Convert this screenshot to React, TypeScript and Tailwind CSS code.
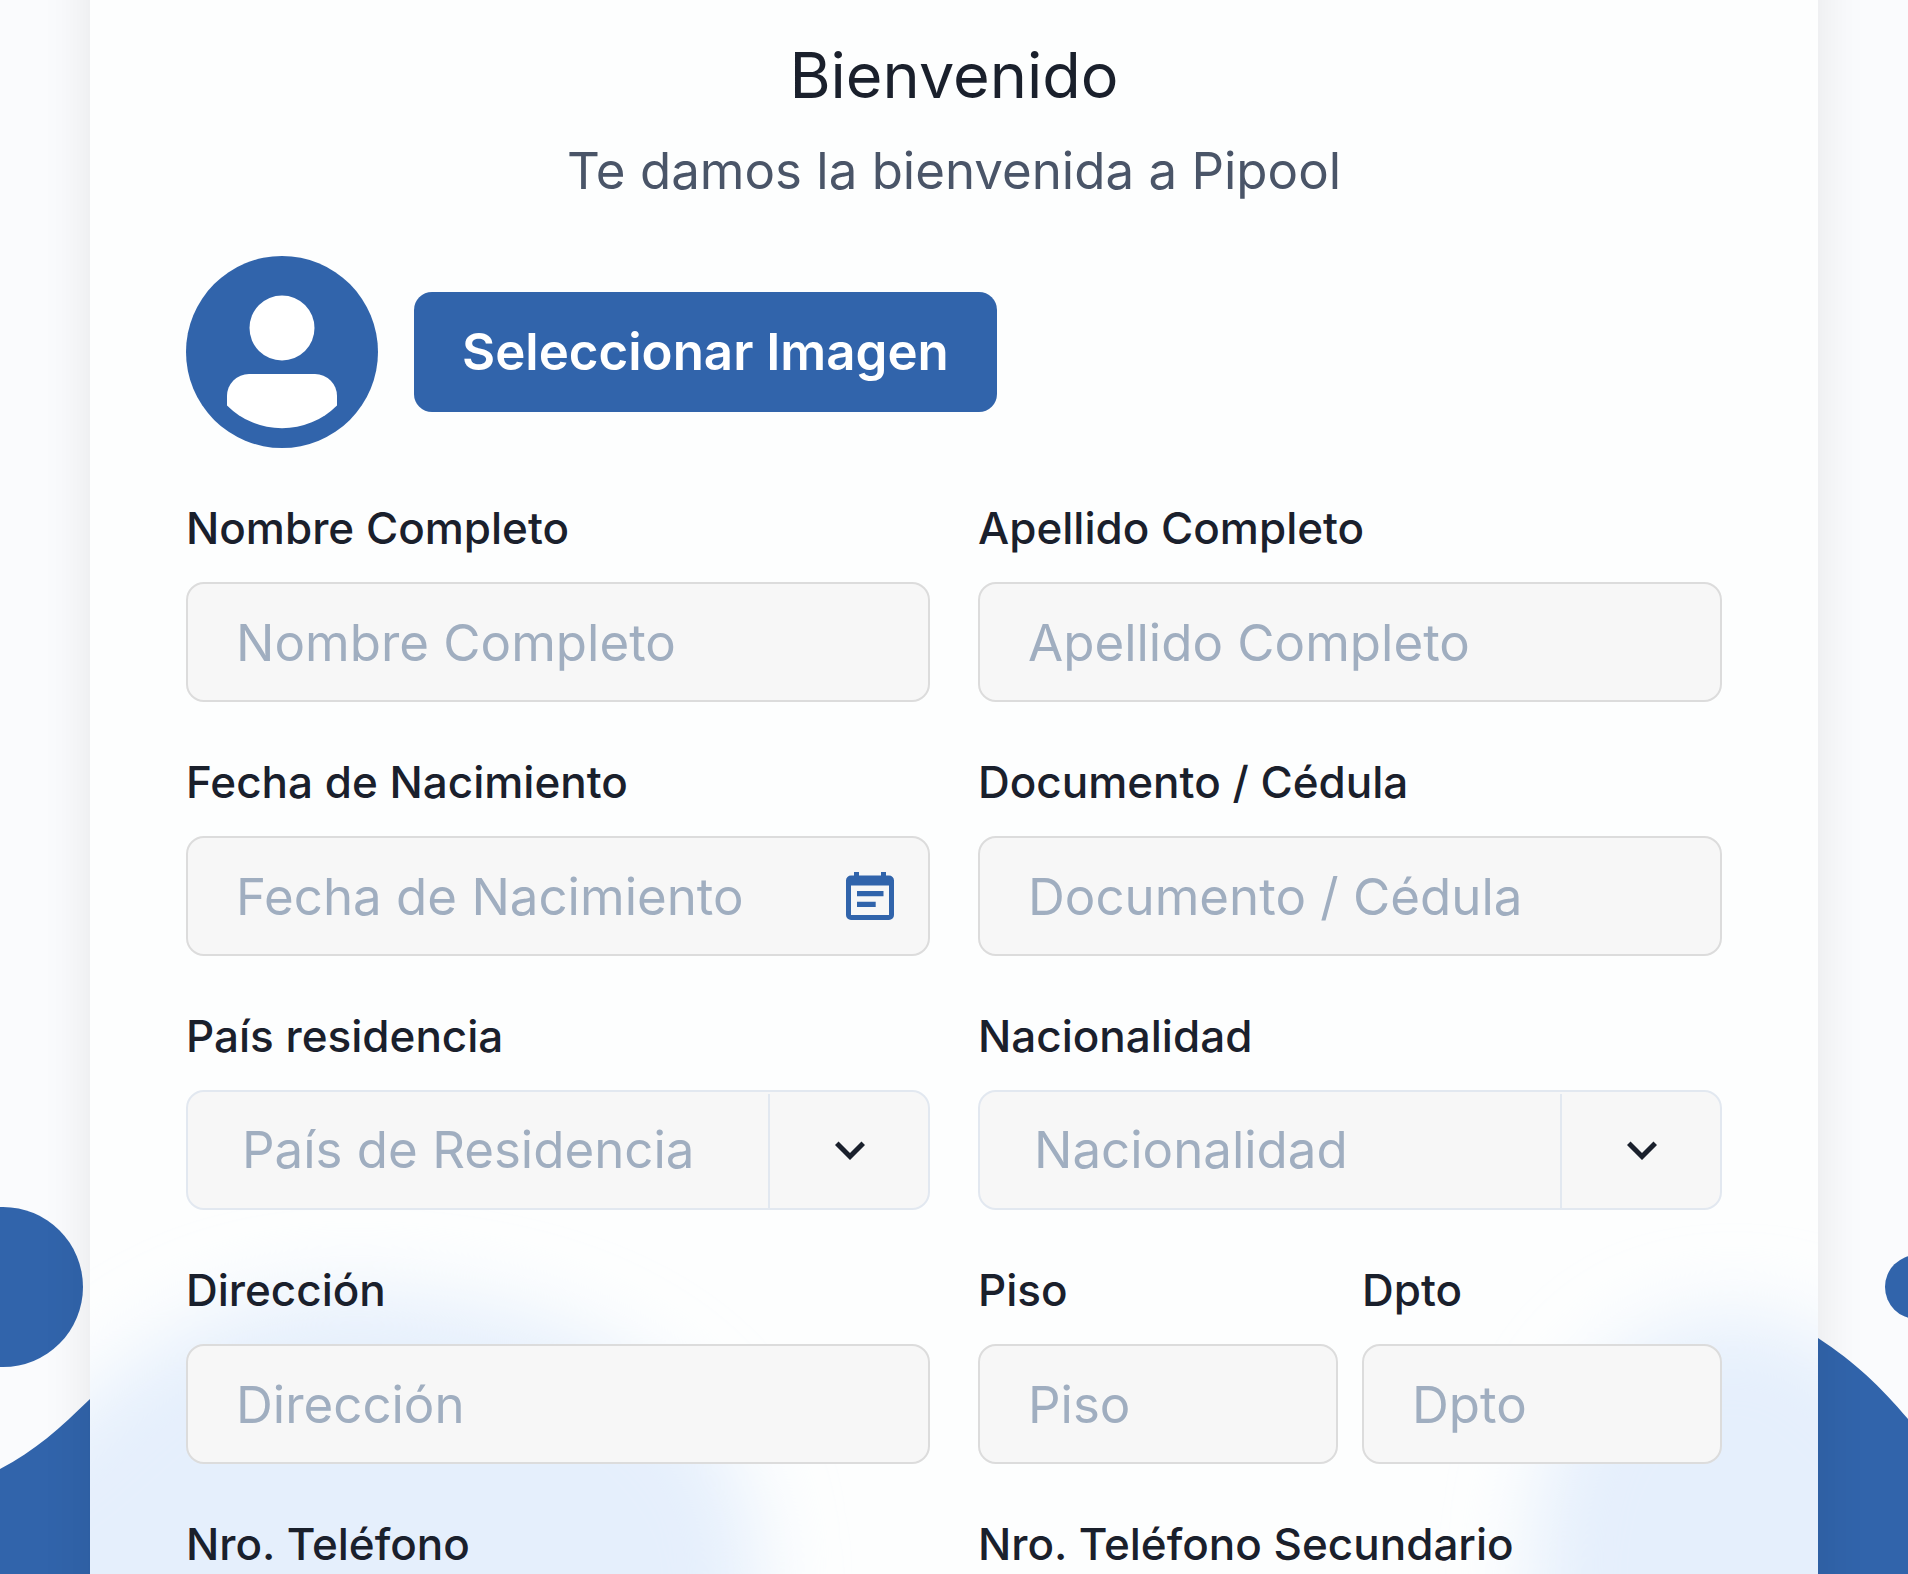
import type { ReactNode } from "react";

const inputClass =
  "h-[120px] w-full min-w-0 rounded-[18px] border-2 border-[#dcdcdc] bg-[#f7f7f7] px-12 text-[51px] text-[#1a202c] outline-none placeholder:text-[#a0aec0] focus:border-[#3164ab]";

function Field({ id, label, children }: { id: string; label: string; children: ReactNode }) {
  return (
    <div className="flex min-w-0 flex-col gap-6">
      <label htmlFor={id} className="text-[44px] leading-[60px] font-medium whitespace-nowrap text-[#1a202c]">
        {label}
      </label>
      {children}
    </div>
  );
}

function TextField({ id, label }: { id: string; label: string }) {
  return (
    <Field id={id} label={label}>
      <input id={id} type="text" placeholder={label} className={inputClass} />
    </Field>
  );
}

function SelectField({ id, label, placeholder }: { id: string; label: string; placeholder: string }) {
  return (
    <Field id={id} label={label}>
      <div className="relative">
        <select
          id={id}
          defaultValue=""
          className="h-[120px] w-full appearance-none rounded-[18px] border-2 border-[#e2e8f0] bg-[#f7f7f7] pr-40 pl-[54px] text-[51px] text-[#a0aec0] outline-none"
        >
          <option value="" disabled>
            {placeholder}
          </option>
          <option>Argentina</option>
          <option>Uruguay</option>
        </select>
        <div className="pointer-events-none absolute top-1 right-0 bottom-0.5 flex w-[162px] items-center justify-center border-l-2 border-[#e2e8f0]">
          <svg width="60" height="60" viewBox="0 0 24 24" fill="#1a202c" aria-hidden="true">
            <path d="M16.59 8.19 12 12.77 7.41 8.19 6 9.6l6 6 6-6z" />
          </svg>
        </div>
      </div>
    </Field>
  );
}

function Avatar() {
  return (
    <svg className="size-48 shrink-0" viewBox="0 0 192 192" role="img" aria-label="Foto de perfil">
      <circle cx="96" cy="96" r="96" fill="#3164ab" />
      <circle cx="96" cy="72" r="32.5" fill="#fff" />
      <path d="M41 149.500V140a22 22 0 0 1 22-22h66a22 22 0 0 1 22 22v9.500a78 78 0 0 1-110 0z" fill="#fff" />
    </svg>
  );
}

function CalendarIcon() {
  return (
    <svg width="48" height="48" viewBox="0 0 48 48" aria-hidden="true">
      <path
        fill="#3164ab"
        fillRule="evenodd"
        d="M8 0h5v3.500h22V0h5v3.500h3a5 5 0 0 1 5 5V43a5 5 0 0 1-5 5H5a5 5 0 0 1-5-5V8.500a5 5 0 0 1 5-5h3zM5 13.500V43h38V13.500zM11 19h26.500v5.300H11zM11 29.700h18.700V35H11z"
      />
    </svg>
  );
}

const leftWave =
  "M-200 1500L0 1469C35 1451 60 1428 90 1399C170 1325 250 1294 345 1294C480 1294 600 1325 680 1400C740 1460 757 1510 757 1574V1800H-200z";
const rightWave =
  "M1533 1800V1574C1533 1420 1610 1316 1735 1316C1765 1316 1795 1322 1818 1338C1856 1363 1880 1386 1908 1419L2100 1700V1800z";

function Background() {
  return (
    <div className="absolute inset-0" aria-hidden="true">
      <svg
        className="absolute inset-0 h-full w-full"
        viewBox="0 0 1908 1574"
        preserveAspectRatio="xMidYMax slice"
        fill="#3164ab"
      >
        <circle cx="3" cy="1287" r="80" />
        <circle cx="1917" cy="1287" r="32" />
        <path d={leftWave} />
        <path d={rightWave} />
      </svg>

      {/* Frosted panel behind the form */}
      <div className="absolute inset-x-[90px] -inset-y-24 bg-[#fdfefe] shadow-[0_0_48px_rgba(0,0,0,0.09)]" />
      <div className="absolute inset-x-[90px] inset-y-0 overflow-hidden">
        <svg
          className="h-full w-full overflow-visible"
          viewBox="90 0 1728 1574"
          preserveAspectRatio="xMidYMax slice"
          fill="#e5effc"
        >
          <defs>
            <filter id="frost" filterUnits="userSpaceOnUse" x="-200" y="1000" width="2300" height="900">
              <feGaussianBlur stdDeviation="40" />
            </filter>
          </defs>
          <g filter="url(#frost)">
            <path d={leftWave} />
            <path d={rightWave} />
          </g>
        </svg>
      </div>
    </div>
  );
}

export default function App() {
  return (
    <main
      className="relative h-screen overflow-hidden bg-[#fafbfd]"
      style={{ fontFamily: 'Inter, "Open Sans", sans-serif' }}
    >
      <Background />
      <section className="relative mx-[90px] px-24 pt-[30px] pb-24">
        <header className="flex flex-col gap-3 text-center">
          <h1 className="text-[63px] leading-[90px] text-[#1a202c]">Bienvenido</h1>
          <p className="text-[51px] leading-[78px] text-[#4a5568]">Te damos la bienvenida a Pipool</p>
        </header>

        <form className="mt-[46px] flex flex-col gap-[50px]">
          <div className="flex items-center gap-9">
            <Avatar />
            <button
              type="button"
              className="h-[120px] rounded-[18px] bg-[#3164ab] px-12 text-[51px] font-semibold whitespace-nowrap text-white"
            >
              Seleccionar Imagen
            </button>
          </div>

          <div className="grid grid-cols-2 gap-x-12 gap-y-[50px]">
            <TextField id="nombre" label="Nombre Completo" />
            <TextField id="apellido" label="Apellido Completo" />

            <Field id="nacimiento" label="Fecha de Nacimiento">
              <div className="relative">
                <input id="nacimiento" type="text" placeholder="Fecha de Nacimiento" className={inputClass} />
                <button type="button" aria-label="Abrir calendario" className="absolute inset-y-0 right-9">
                  <CalendarIcon />
                </button>
              </div>
            </Field>
            <TextField id="documento" label="Documento / Cédula" />

            <SelectField id="pais" label="País residencia" placeholder="País de Residencia" />
            <SelectField id="nacionalidad" label="Nacionalidad" placeholder="Nacionalidad" />

            <TextField id="direccion" label="Dirección" />
            <div className="grid grid-cols-2 gap-6">
              <TextField id="piso" label="Piso" />
              <TextField id="dpto" label="Dpto" />
            </div>

            <TextField id="telefono" label="Nro. Teléfono" />
            <TextField id="telefono-secundario" label="Nro. Teléfono Secundario" />
          </div>
        </form>
      </section>
    </main>
  );
}
